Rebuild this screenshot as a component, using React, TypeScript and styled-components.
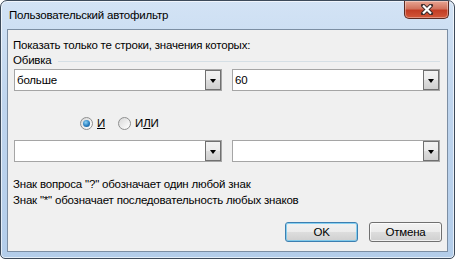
import React from 'react';
import styled, { createGlobalStyle } from 'styled-components';

const Global = createGlobalStyle`
  html, body {
    margin: 0;
    padding: 0;
    background: #ffffff;
  }
  body {
    font-family: "Liberation Sans", Arial, sans-serif;
    font-size: 11.5px;
    letter-spacing: -0.2px;
    color: #000;
  }
`;

// window chrome
const Window = styled.div`
  width: 455px;
  height: 259px;
  box-sizing: border-box;
  border: 1px solid #3d4a5a;
  border-radius: 7px 7px 5px 5px;
  background: linear-gradient(180deg, #d3e3f5 0%, #bfd5ee 40%, #b3cdea 100%);
  box-shadow: inset 0 0 0 1px rgba(255, 255, 255, 0.65);
  display: flex;
  flex-direction: column;
  padding: 0 6px 6px 6px;
  overflow: hidden;
`;

const TitleBar = styled.div`
  height: 28px;
  display: flex;
  justify-content: space-between;
  align-items: flex-start;
`;

const Title = styled.div`
  padding: 7px 0 0 2px;
  line-height: 15px;
  color: #000;
`;

const CloseButton = styled.div`
  width: 45px;
  height: 18px;
  margin-right: -1px;
  box-sizing: border-box;
  border: 1px solid #5b2a22;
  border-top: none;
  border-radius: 0 0 5px 5px;
  background: linear-gradient(180deg, #e8a593 0%, #d2735d 45%, #c23d25 55%, #d2583a 100%);
  box-shadow: inset 0 0 0 1px rgba(255, 255, 255, 0.35);
  display: flex;
  align-items: center;
  justify-content: center;
`;

const Client = styled.div`
  flex: 1;
  border: 1px solid #7c8ea3;
  background: #f0f0f0;
  display: flex;
  flex-direction: column;
  padding: 8px 5px 0 5px;
`;

const Line = styled.div<{ $top?: number }>`
  line-height: 15px;
  margin-top: ${p => p.$top ?? 0}px;
  white-space: nowrap;
`;

const GroupHeader = styled.div`
  display: flex;
  align-items: center;
  line-height: 15px;
  gap: 6px;
  padding-right: 2px;
  &::after {
    content: '';
    flex: 1;
    height: 1px;
    margin-top: 1px;
    background: #d5dfe5;
  }
`;

const ComboRow = styled.div<{ $top: number }>`
  display: flex;
  gap: 10px;
  padding-left: 1px;
  margin-top: ${p => p.$top}px;
`;

const ComboBox = styled.div`
  width: 208px;
  height: 22px;
  box-sizing: border-box;
  border: 1px solid #a5a5a5;
  background: #fff;
  display: flex;
  align-items: stretch;
`;

const ComboText = styled.div`
  flex: 1;
  padding-left: 2px;
  line-height: 20px;
`;

const DropButton = styled.div`
  width: 16px;
  box-sizing: border-box;
  border: 1px solid #707070;
  background: linear-gradient(180deg, #f2f2f2 0%, #ebebeb 50%, #dddddd 51%, #cfcfcf 100%);
  display: flex;
  align-items: center;
  justify-content: center;
`;

const Arrow = styled.div`
  width: 0;
  height: 0;
  border-left: 3.5px solid transparent;
  border-right: 3.5px solid transparent;
  border-top: 4px solid #000;
  margin-top: 1px;
`;

const RadioRow = styled.div`
  display: flex;
  align-items: center;
  gap: 4px;
  margin-top: 24px;
  padding-left: 67px;
  line-height: 16px;
`;

const Radio = styled.div<{ $checked?: boolean }>`
  width: 13px;
  height: 13px;
  box-sizing: border-box;
  border-radius: 50%;
  border: 1px solid #8e8f8f;
  background: linear-gradient(135deg, #d8d8d8 0%, #f4f4f4 70%, #fff 100%);
  display: flex;
  align-items: center;
  justify-content: center;
  &::after {
    content: '';
    display: ${p => (p.$checked ? 'block' : 'none')};
    width: 7px;
    height: 7px;
    border-radius: 50%;
    background: radial-gradient(circle at 40% 35%, #8ad1f5 0%, #2a7fc0 55%, #10508a 100%);
  }
`;

const RadioLabel = styled.span`
  margin-right: 9px;
`;

const Accel = styled.span`
  text-decoration: underline;
`;

const ButtonRow = styled.div`
  display: flex;
  justify-content: flex-end;
  gap: 11px;
  margin-top: 14px;
`;

const Button = styled.div<{ $default?: boolean }>`
  width: 73px;
  height: 20px;
  box-sizing: border-box;
  border: 1px solid ${p => (p.$default ? '#3c7fb1' : '#707070')};
  border-radius: 3px;
  background: linear-gradient(180deg, #f2f2f2 0%, #ebebeb 50%, #dddddd 51%, #cfcfcf 100%);
  box-shadow: inset 0 0 0 1px ${p => (p.$default ? 'rgba(110, 200, 240, 0.8)' : 'rgba(255,255,255,0.7)')};
  display: flex;
  align-items: center;
  justify-content: center;
  line-height: 16px;
`;

const Combo = ({ value }: { value?: string }) => (
  <ComboBox>
    <ComboText>{value}</ComboText>
    <DropButton>
      <Arrow />
    </DropButton>
  </ComboBox>
);

export default function App() {
  return (
    <>
      <Global />
      <Window>
        <TitleBar>
          <Title>Пользовательский автофильтр</Title>
          <CloseButton>
            <svg width="14" height="11" viewBox="0 0 14 11">
              <path
                d="M3 1.5 L11 9.5 M11 1.5 L3 9.5"
                fill="none"
                stroke="#3b2a2a"
                strokeWidth="4"
                strokeLinecap="round"
              />
              <path
                d="M3 1.5 L11 9.5 M11 1.5 L3 9.5"
                fill="none"
                stroke="#fff"
                strokeWidth="2.2"
              />
            </svg>
          </CloseButton>
        </TitleBar>
        <Client>
          <Line>Показать только те строки, значения которых:</Line>
          <GroupHeader>Обивка</GroupHeader>
          <ComboRow $top={1}>
            <Combo value="больше" />
            <Combo value="60" />
          </ComboRow>
          <RadioRow>
            <Radio $checked />
            <RadioLabel>
              <Accel>И</Accel>
            </RadioLabel>
            <Radio />
            <RadioLabel>
              И<Accel>Л</Accel>И
            </RadioLabel>
          </RadioRow>
          <ComboRow $top={9}>
            <Combo />
            <Combo />
          </ComboRow>
          <Line $top={15}>Знак вопроса "?" обозначает один любой знак</Line>
          <Line $top={1}>Знак "*" обозначает последовательность любых знаков</Line>
          <ButtonRow>
            <Button $default>OK</Button>
            <Button>Отмена</Button>
          </ButtonRow>
        </Client>
      </Window>
    </>
  );
}
